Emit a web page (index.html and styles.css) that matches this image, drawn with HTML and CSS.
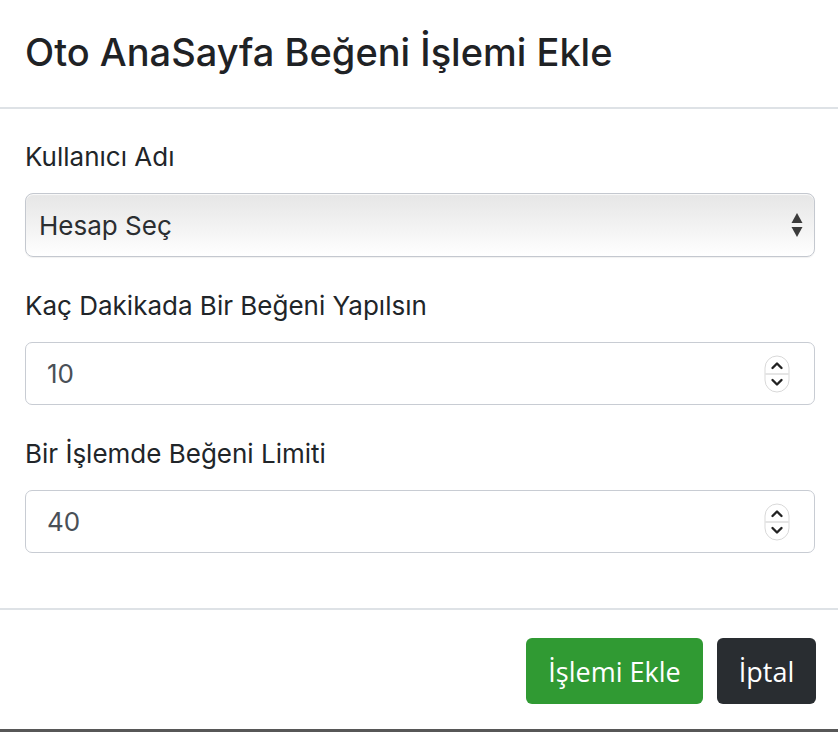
FILE: index.html
```html
<!DOCTYPE html>
<html lang="tr">
<head>
<meta charset="utf-8">
<title>Oto AnaSayfa Beğeni İşlemi Ekle</title>
<link rel="stylesheet" href="styles.css">
</head>
<body>
<div class="modal">
  <div class="modal-header">
    <h5 class="modal-title">Oto AnaSayfa Beğeni İşlemi Ekle</h5>
  </div>
  <div class="modal-body">
    <div class="form-group">
      <label class="form-label">Kullanıcı Adı</label>
      <div class="select-box">
        <span class="select-text">Hesap Seç</span>
        <svg class="select-arrows" width="12" height="26" viewBox="0 0 12 26">
          <path d="M6 1 L11.5 11 L0.5 11 Z" fill="#3b3b3b"/>
          <path d="M6 25 L11.5 15 L0.5 15 Z" fill="#3b3b3b"/>
        </svg>
      </div>
    </div>
    <div class="form-group">
      <label class="form-label">Kaç Dakikada Bir Beğeni Yapılsın</label>
      <div class="input-box">
        <span class="input-text">10</span>
        <svg class="spinner" width="26" height="38" viewBox="0 0 26 38">
          <rect x="1" y="1" width="24" height="36" rx="12" fill="#fff" stroke="#d9d9d9" stroke-width="1"/>
          <line x1="1.5" y1="19" x2="24.5" y2="19" stroke="#d4d4d4" stroke-width="1.2"/>
          <path d="M8.5 13 L13 8.5 L17.5 13" fill="none" stroke="#222" stroke-width="2.4" stroke-linecap="round" stroke-linejoin="round"/>
          <path d="M8.5 25 L13 29.5 L17.5 25" fill="none" stroke="#222" stroke-width="2.4" stroke-linecap="round" stroke-linejoin="round"/>
        </svg>
      </div>
    </div>
    <div class="form-group">
      <label class="form-label">Bir İşlemde Beğeni Limiti</label>
      <div class="input-box">
        <span class="input-text">40</span>
        <svg class="spinner" width="26" height="38" viewBox="0 0 26 38">
          <rect x="1" y="1" width="24" height="36" rx="12" fill="#fff" stroke="#d9d9d9" stroke-width="1"/>
          <line x1="1.5" y1="19" x2="24.5" y2="19" stroke="#d4d4d4" stroke-width="1.2"/>
          <path d="M8.5 13 L13 8.5 L17.5 13" fill="none" stroke="#222" stroke-width="2.4" stroke-linecap="round" stroke-linejoin="round"/>
          <path d="M8.5 25 L13 29.5 L17.5 25" fill="none" stroke="#222" stroke-width="2.4" stroke-linecap="round" stroke-linejoin="round"/>
        </svg>
      </div>
    </div>
  </div>
  <div class="modal-footer">
    <button class="btn btn-success">İşlemi Ekle</button>
    <button class="btn btn-dark">İptal</button>
  </div>
</div>
</body>
</html>
```
FILE: styles.css
```css
html, body {
  margin: 0;
  padding: 0;
  background: #575757;
}
body {
  width: 838px;
  height: 732px;
  overflow: hidden;
  font-family: "Inter", "Liberation Sans", sans-serif;
  color: #212529;
}
.modal {
  background: #fff;
  height: 729px;
  display: flex;
  flex-direction: column;
}
.modal-header {
  height: 109px;
  box-sizing: border-box;
  padding: 0 23px 0 25px;
  border-bottom: 2px solid #dee2e6;
  display: flex;
  align-items: center;
}
.modal-title {
  margin: 0;
  font-size: 38px;
  font-weight: 500;
  letter-spacing: 0;
  color: #1f2225;
  padding-bottom: 4px;
}
.modal-body {
  padding: 30px 23px 24px 25px;
}
.form-group {
  margin-bottom: 31px;
  display: flex;
  flex-direction: column;
}
.form-label {
  font-size: 26px;
  line-height: 36px;
  margin-bottom: 18px;
  color: #212529;
}
.select-box {
  height: 64px;
  box-sizing: border-box;
  border: 1.5px solid #c4c8cf;
  border-radius: 8px;
  background: linear-gradient(#e6e6e6, #f3f3f3 55%, #ffffff);
  box-shadow: inset 0 1px 1px rgba(255,255,255,0.8), 0 1px 1px rgba(0,0,0,0.06);
  display: flex;
  align-items: center;
  justify-content: space-between;
  padding: 0 11px 0 13px;
}
.select-text {
  font-size: 26px;
  color: #2b2e31;
}
.select-arrows {
  display: block;
}
.input-box {
  height: 63px;
  box-sizing: border-box;
  border: 1.5px solid #c8ccd3;
  border-radius: 7px;
  background: #fff;
  display: flex;
  align-items: center;
  justify-content: space-between;
  padding: 0 24px 0 21px;
}
.input-text {
  font-size: 26px;
  color: #495057;
}
.spinner {
  display: block;
}
.modal-footer {
  border-top: 2px solid #dee2e6;
  flex: 1;
  display: flex;
  justify-content: flex-end;
  align-items: flex-start;
  gap: 14px;
  padding: 28px 22px 0 25px;
}
.btn {
  height: 66px;
  border: none;
  border-radius: 6px;
  font-family: "Open Sans", "Liberation Sans", sans-serif;
  font-size: 27px;
  color: #fff;
  padding: 0;
  cursor: pointer;
}
.btn-success {
  background: #309a33;
  width: 177px;
}
.btn-dark {
  background: #292d31;
  width: 99px;
}
```
